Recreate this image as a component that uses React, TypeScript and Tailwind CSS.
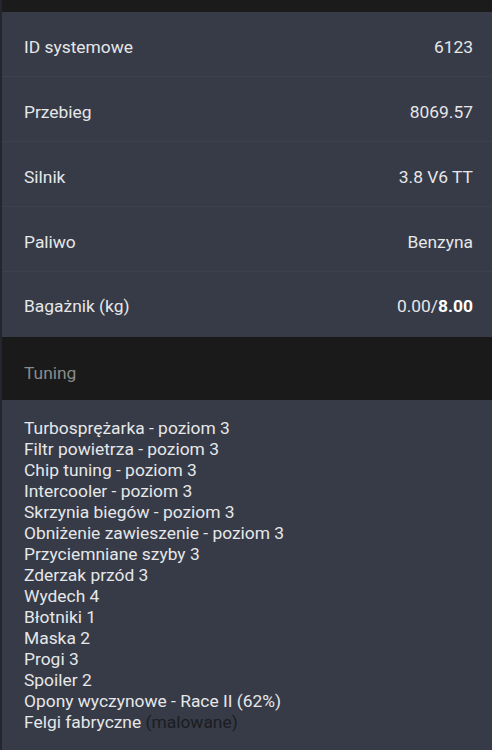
const specs = [
  { label: "ID systemowe", value: "6123" },
  { label: "Przebieg", value: "8069.57" },
  { label: "Silnik", value: "3.8 V6 TT" },
  { label: "Paliwo", value: "Benzyna" },
];

const tuning = [
  "Turbosprężarka - poziom 3",
  "Filtr powietrza - poziom 3",
  "Chip tuning - poziom 3",
  "Intercooler - poziom 3",
  "Skrzynia biegów - poziom 3",
  "Obniżenie zawieszenie - poziom 3",
  "Przyciemniane szyby 3",
  "Zderzak przód 3",
  "Wydech 4",
  "Błotniki 1",
  "Maska 2",
  "Progi 3",
  "Spoiler 2",
  "Opony wyczynowe - Race II (62%)",
];

export default function App() {
  return (
    <div
      className="w-[492px] h-[750px] overflow-hidden bg-[#363b47] text-[#e6e7e9] text-[17.4px] border-l-2 border-[#23262d]"
      style={{ fontFamily: "Roboto, 'Noto Sans', sans-serif" }}
    >
      <div className="h-[12px] bg-[#1b1b1c]" />

      {specs.map((row) => (
        <div
          key={row.label}
          className="h-[65px] flex items-center justify-between pl-[22px] pr-[19px] pt-[6px] border-b border-[#3c414d]"
        >
          <span>{row.label}</span>
          <span>{row.value}</span>
        </div>
      ))}
      <div className="h-[65px] flex items-center justify-between pl-[22px] pr-[19px] pt-[4px]">
        <span>Bagażnik (kg)</span>
        <span>
          0.00/<b className="font-bold text-white">8.00</b>
        </span>
      </div>

      <div className="h-[63px] flex items-center pl-[22px] pt-[9px] bg-[#1a1a1a] text-[#8b8b8b]">
        Tuning
      </div>

      <div className="pl-[22px] pt-[18px] leading-[21px]">
        {tuning.map((t) => (
          <div key={t}>{t}</div>
        ))}
        <div>
          Felgi fabryczne <span className="text-[#1b1d22]">(malowane)</span>
        </div>
      </div>
    </div>
  );
}
